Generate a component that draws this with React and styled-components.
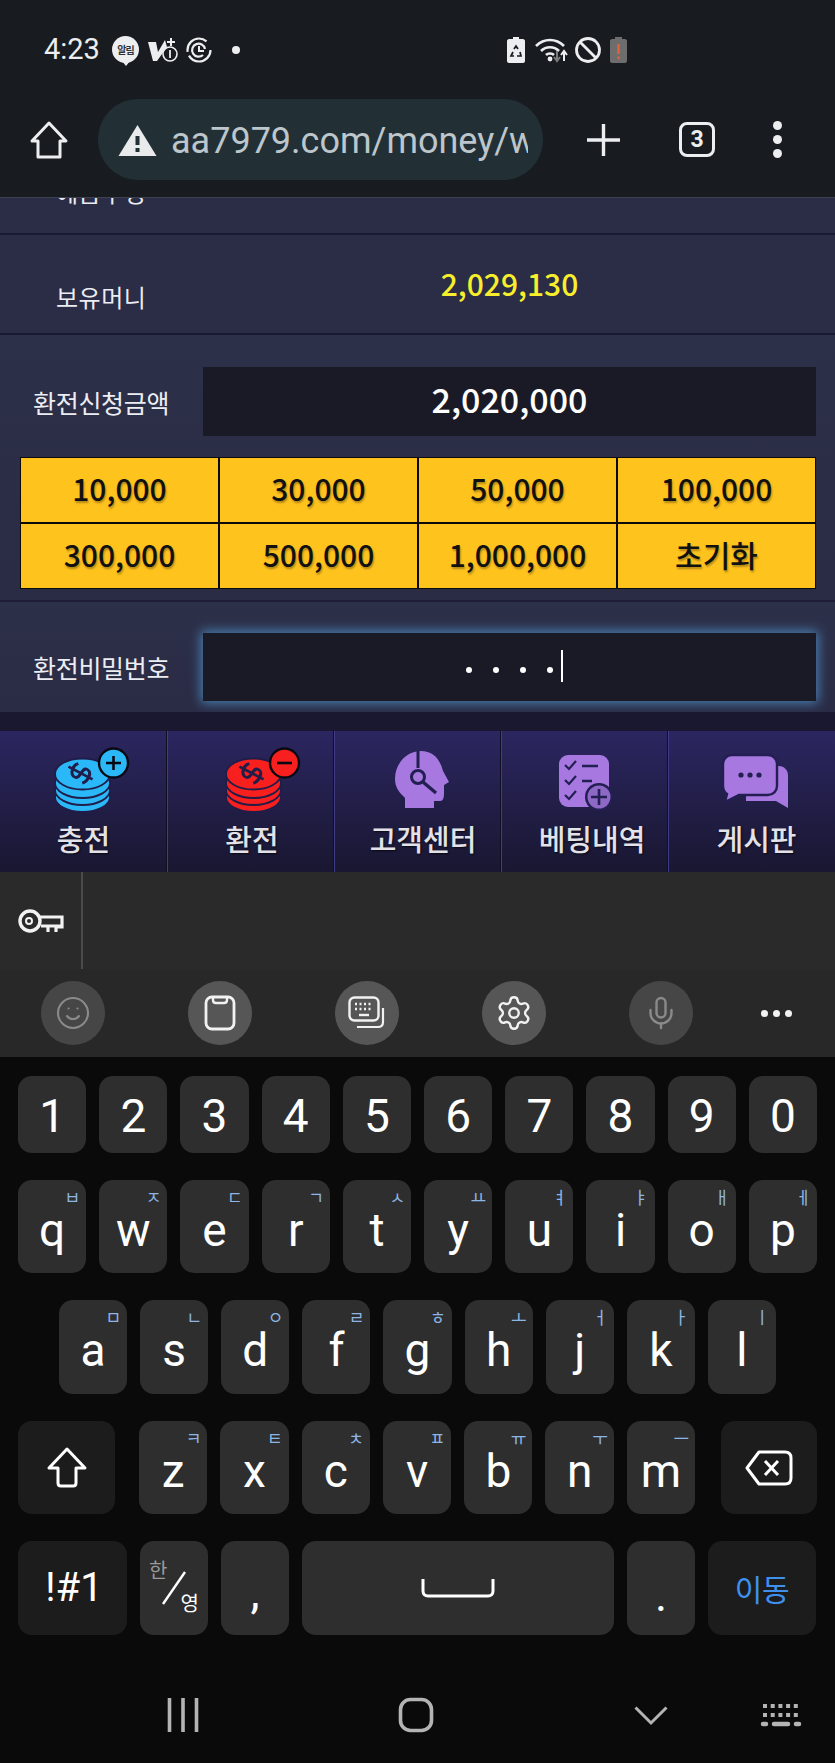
import React from "react";
import styled, { createGlobalStyle } from "styled-components";
import { Smile, Settings, Mic } from "lucide-react";

const Global = createGlobalStyle`
  html, body { margin: 0; padding: 0; background: #0a0a0a; }
  * { box-sizing: border-box; }
  #root { width: 835px; height: 1763px; overflow: hidden; }
`;

const KR = `"Noto Sans CJK KR", "Noto Sans", sans-serif`;

const Page = styled.div`
  width: 835px;
  height: 1763px;
  display: flex;
  flex-direction: column;
  font-family: ${KR};
  overflow: hidden;
`;

/* browser chrome */
const Chrome = styled.header`
  height: 198px;
  background: #181c20;
  border-bottom: 1px solid #3d424c;
`;
const StatusBar = styled.div`
  height: 99px;
  padding: 0 208px 0 44px;
  display: flex;
  align-items: center;
  justify-content: space-between;
  color: #eceef0;
`;
const StatusGroup = styled.div`
  display: flex;
  align-items: center;
  gap: ${(p) => p.$gap}px;
`;
const Clock = styled.span`
  font: 400 29px/1 Roboto, sans-serif;
  width: 68px;
`;
const Notice = styled.span`
  position: relative;
  width: 27px;
  height: 27px;
  border-radius: 50%;
  background: #eceef0;
  color: #30343a;
  font: 700 10px/27px ${KR};
  text-align: center;
  letter-spacing: -1px;
  margin-right: 9px;
  &::after {
    content: "";
    position: absolute;
    left: 10px;
    bottom: -3px;
    border-left: 4px solid transparent;
    border-right: 4px solid transparent;
    border-top: 5px solid #eceef0;
  }
`;
const UrlRow = styled.div`
  height: 81px;
  padding-left: 30px;
  display: flex;
  align-items: center;
`;
const UrlPill = styled.div`
  width: 445px;
  height: 81px;
  margin-left: 30px;
  margin-right: 44px;
  padding: 0 15px 0 20px;
  border-radius: 40px;
  background: #223036;
  display: flex;
  align-items: center;
  gap: 14px;
  overflow: hidden;
`;
const UrlText = styled.span`
  flex: 1;
  min-width: 0;
  padding-top: 3px;
  overflow: hidden;
  white-space: nowrap;
  color: #bcc6cb;
  font: 400 36px/44px Roboto, sans-serif;
`;
const TabCount = styled.span`
  width: 36px;
  height: 35px;
  margin-left: 59px;
  border: 3px solid #eceef0;
  border-radius: 8px;
  color: #eceef0;
  font: 700 23px/29px Roboto, sans-serif;
  text-align: center;
`;
const MenuDots = styled.span`
  width: 9px;
  margin-left: 58px;
  display: flex;
  flex-direction: column;
  gap: 5px;
  & > i {
    display: block;
    width: 9px;
    height: 9px;
    border-radius: 50%;
    background: #eceef0;
  }
`;

/* page form */
const Form = styled.section`
  height: 514px;
  background: #2b2c46;
  display: flex;
  flex-direction: column;
`;
const ClippedRow = styled.div`
  height: 37px;
  padding: 0 0 26px 56px;
  border-bottom: 2px solid #191932;
  display: flex;
  align-items: flex-end;
  overflow: hidden;
  color: #ecedf2;
  font-size: 24px;
  line-height: 30px;
  letter-spacing: 0.5px;
`;
const ClippedText = styled.span`
  flex: none;
  line-height: 30px;
`;
const MoneyRow = styled.div`
  height: 100px;
  border-bottom: 2px solid #191932;
  padding-right: 19px;
  display: grid;
  grid-template-columns: 203px 1fr;
  align-items: start;
`;
const MoneyLabel = styled.span`
  padding: 47px 0 0 56px;
  color: #ecedf2;
  font-size: 24px;
  line-height: 30px;
  letter-spacing: 0.5px;
`;
const MoneyValue = styled.span`
  padding-top: 30px;
  text-align: center;
  color: #f7ee2c;
  font-size: 30px;
  font-weight: 500;
  line-height: 36px;
`;
const Block = styled.div`
  height: ${(p) => p.$h}px;
  padding: ${(p) => p.$top}px 19px 0 20px;
  background: linear-gradient(#2d3049, #2a2b44);
  border-bottom: ${(p) => (p.$line ? "2px solid #1d1e36" : "none")};
`;
const Field = styled.div`
  display: grid;
  grid-template-columns: 170px 1fr;
  align-items: center;
  padding-left: 13px;
`;
const FieldLabel = styled.label`
  color: #ecedf2;
  font-size: 25px;
  line-height: 32px;
  letter-spacing: -0.3px;
  white-space: nowrap;
`;
const FieldBox = styled.div`
  height: ${(p) => p.$h}px;
  padding-bottom: ${(p) => p.$pb ?? 0}px;
  background: #1a1a27;
  display: flex;
  align-items: center;
  justify-content: center;
  color: #fff;
  font-size: 34px;
  font-weight: 500;
  box-shadow: ${(p) => (p.$focus ? "0 0 11px 2px #4a82b4" : "none")};
`;
const Amounts = styled.div`
  margin-top: 21px;
  display: grid;
  grid-template-columns: repeat(4, 1fr);
  grid-auto-rows: 64px;
  gap: 2px;
  padding: 1px;
  background: #0b0b0b;
`;
const Amount = styled.button`
  border: 0;
  padding: 0 0 4px;
  background: #ffc31e;
  color: #111;
  font: 500 30px/1 ${KR};
  text-shadow: 1px 2px 2px rgba(0, 0, 0, 0.3);
`;
const Dots = styled.div`
  position: relative;
  display: flex;
  gap: 21px;
  margin-top: 5px;
`;
const Dot = styled.i`
  width: 6px;
  height: 6px;
  border-radius: 50%;
  background: #fff;
`;
const Caret = styled.i`
  position: absolute;
  right: -10px;
  top: -17px;
  width: 2px;
  height: 32px;
  background: #fff;
`;
const Band = styled.div`
  height: 19px;
  background: #1a1830;
`;

/* site bottom nav */
const SiteNav = styled.nav`
  height: 141px;
  display: grid;
  grid-template-columns: repeat(5, 1fr);
`;
const NavCell = styled.a`
  padding-top: 17px;
  display: flex;
  flex-direction: column;
  align-items: center;
  background: linear-gradient(#2b2660, #191731);
  border-left: ${(p) => (p.$first ? "none" : "1px solid #413c86")};
  box-shadow: ${(p) => (p.$first ? "none" : "-1px 0 0 #0f0e22")};
`;
const NavLabel = styled.span`
  margin-top: 7px;
  margin-left: ${(p) => p.$ml}px;
  color: #e2e2e8;
  font-size: 29px;
  font-weight: 500;
  line-height: 38px;
  white-space: nowrap;
  text-shadow: 1px 1px 2px rgba(0, 0, 0, 0.7);
`;

/* keyboard */
const Suggest = styled.div`
  height: 97px;
  background: #2a2a2a;
  display: flex;
  align-items: center;
`;
const SuggestKey = styled.div`
  width: 83px;
  height: 97px;
  padding-left: 18px;
  display: flex;
  align-items: center;
  border-right: 2px solid #4b4b4b;
`;
const ToolBar = styled.div`
  height: 88px;
  background: #282828;
  padding: 0 27px 0 41px;
  display: flex;
  align-items: center;
  gap: 83px;
`;
const ToolButton = styled.div`
  width: 64px;
  height: 64px;
  border-radius: 50%;
  background: ${(p) => (p.$off ? "#464646" : "#565656")};
  color: ${(p) => (p.$off ? "#8a8a8a" : "#f2f2f2")};
  display: flex;
  align-items: center;
  justify-content: center;
`;
const More = styled.div`
  margin-left: -15px;
  display: flex;
  gap: 5px;
  & > i {
    width: 7px;
    height: 7px;
    border-radius: 50%;
    background: #f2f2f2;
  }
`;
const Board = styled.div`
  flex: 1;
  background: #0a0a0a;
  padding-top: 19px;
  display: flex;
  flex-direction: column;
  gap: 27px;
`;
const KeyRow = styled.div`
  height: ${(p) => p.$h}px;
  padding: 0 ${(p) => p.$pr ?? 18}px 0 ${(p) => p.$pl ?? 18}px;
  display: flex;
  gap: 13px;
`;
const Key = styled.div`
  position: relative;
  flex: ${(p) => (p.$w ? `0 0 ${p.$w}px` : "1 1 0")};
  margin-left: ${(p) => p.$ml ?? 0}px;
  border-radius: 14px;
  background: ${(p) => (p.$fn ? "#1c1c1c" : "#2e2e2e")};
  color: #fff;
  display: flex;
  align-items: center;
  justify-content: center;
  font: 400 ${(p) => p.$size ?? 46}px/1 Roboto, sans-serif;
  padding-top: ${(p) => p.$pt ?? 0}px;
  padding-left: ${(p) => p.$pl ?? 0}px;
`;
const Hint = styled.span`
  position: absolute;
  top: 6px;
  right: 6px;
  color: #8db6e4;
  font: 400 17px/22px ${KR};
`;
const LangTop = styled.span`
  position: absolute;
  left: 9px;
  top: 18px;
  color: #9a9a9a;
  font: 400 20px/22px ${KR};
`;
const LangBottom = styled.span`
  position: absolute;
  right: 9px;
  bottom: 21px;
  color: #fff;
  font: 400 20px/22px ${KR};
`;
const GoLabel = styled.span`
  color: #3f8fee;
  font: 400 30px/1 ${KR};
  letter-spacing: -0.3px;
`;
const SysNav = styled.div`
  height: 128px;
  margin-top: -27px;
  padding: 32px 35px 0 167px;
  display: flex;
  align-items: center;
  color: #b4b4b4;
`;

/* drawings */
const Ico = ({ w, h, children, style, vb }) => (
  <svg width={w} height={h} viewBox={vb || `0 0 ${w} ${h}`} fill="none" style={{ flex: "none", overflow: "visible", ...style }}>
    {children}
  </svg>
);

const Dollar = ({ x, y, c }) => (
  <g transform={`translate(${x} ${y}) rotate(-62) scale(0.9 1.05)`} stroke={c} strokeWidth="3" fill="none">
    <path d="M8 -6 C4 -10 -7 -9 -7 -3 C-7 3 7 -2 7 4 C7 10 -5 10 -9 6" />
    <path d="M0 -13 V13" />
  </g>
);

const CoinIcon = ({ color, minus, dx = 0 }) => {
  const dark = "#211d49";
  const cx = 38.5 + dx;
  return (
    <Ico w={80} h={64}>
      {[49, 42, 35].map((cy) => (
        <ellipse key={cy} cx={cx} cy={cy} rx="27.5" ry="15" fill={color} stroke={dark} strokeWidth="1.8" />
      ))}
      <ellipse cx={cx} cy={26} rx="27.5" ry="15.5" fill={color} stroke={dark} strokeWidth="1.8" />
      <Dollar x={cx - 2} y={25} c={dark} />
      <circle cx={69.5 + dx} cy="15" r="14.5" fill={color} stroke="#090914" strokeWidth="2.4" />
      <path d={minus ? `M${62 + dx} 15H${77 + dx}` : `M${62 + dx} 15H${77 + dx}M${69.5 + dx} 8V22`} stroke="#090914" strokeWidth="2.6" />
    </Ico>
  );
};

const HeadIcon = () => (
  <Ico w={80} h={64}>
    <path d="M43 3C29 3 17 15 17 31C17 40 22 45 27 50V60H56V53H62C66 53 66 48 66 44V37L71 34L65 23C62 11 55 3 43 3Z" fill="#a678e0" />
    <path d="M40 3V20" stroke="#231f52" strokeWidth="3" />
    <circle cx="40" cy="29" r="6.5" stroke="#231f52" strokeWidth="3" />
    <path d="M45 34L58 45" stroke="#231f52" strokeWidth="3.4" />
  </Ico>
);

const ListIcon = () => (
  <Ico w={80} h={64}>
    <rect x="14" y="7" width="50" height="52" rx="9" fill="#a678e0" />
    <path d="M20 17L24 21L31 13M20 32L24 36L31 28M20 47L24 51L31 43" stroke="#231f52" strokeWidth="2.2" />
    <path d="M37 18H53M37 33H47" stroke="#231f52" strokeWidth="2.6" />
    <circle cx="54" cy="49" r="14" fill="#231f52" />
    <circle cx="54" cy="49" r="11.5" fill="#8d68c4" />
    <path d="M46 49H62M54 41V57" stroke="#231f52" strokeWidth="2.6" />
  </Ico>
);

const ChatIcon = () => (
  <Ico w={80} h={64}>
    <path d="M34 18H67C72 18 76 22 76 27V60L64 53H34Z" fill="#a678e0" />
    <path d="M20 7H56C61 7 65 11 65 16V38C65 43 61 47 56 47H27L13 54L15 46C12 44 11 41 11 38V16C11 11 15 7 20 7Z" fill="#a678e0" stroke="#231f52" strokeWidth="2.4" />
    <circle cx="29" cy="27" r="2.6" fill="#231f52" />
    <circle cx="38" cy="27" r="2.6" fill="#231f52" />
    <circle cx="47" cy="27" r="2.6" fill="#231f52" />
  </Ico>
);

const navItems = [
  { label: "충전", ml: 0, icon: <CoinIcon color="#2bb8f8" /> },
  { label: "환전", ml: 2, icon: <CoinIcon color="#f8201f" minus dx={4} /> },
  { label: "고객센터", ml: 10, icon: <HeadIcon /> },
  { label: "베팅내역", ml: 14, icon: <ListIcon /> },
  { label: "게시판", ml: 9, icon: <ChatIcon /> },
];

const amounts = ["10,000", "30,000", "50,000", "100,000", "300,000", "500,000", "1,000,000", "초기화"];
const digits = "1234567890".split("");
const row2 = [["q", "ㅂ"], ["w", "ㅈ"], ["e", "ㄷ"], ["r", "ㄱ"], ["t", "ㅅ"], ["y", "ㅛ"], ["u", "ㅕ"], ["i", "ㅑ"], ["o", "ㅐ"], ["p", "ㅔ"]];
const row3 = [["a", "ㅁ"], ["s", "ㄴ"], ["d", "ㅇ"], ["f", "ㄹ"], ["g", "ㅎ"], ["h", "ㅗ"], ["j", "ㅓ"], ["k", "ㅏ"], ["l", "ㅣ"]];
const row4 = [["z", "ㅋ"], ["x", "ㅌ"], ["c", "ㅊ"], ["v", "ㅍ"], ["b", "ㅠ"], ["n", "ㅜ"], ["m", "ㅡ"]];

export default function App() {
  return (
    <Page>
      <Global />
      <Chrome>
        <StatusBar>
          <StatusGroup $gap={0}>
            <Clock>4:23</Clock>
            <Notice>알림</Notice>
            <Ico w={30} h={24} style={{ marginRight: 8 }}>
              <path d="M0 4H8L10 14L17 2L19 9L9 23H5Z" fill="#eceef0" />
              <path d="M19 4H27M23 0V8" stroke="#eceef0" strokeWidth="2" />
              <circle cx="22" cy="16" r="7" fill="#181c20" stroke="#eceef0" strokeWidth="1.6" />
              <path d="M22 12V20" stroke="#eceef0" strokeWidth="1.8" />
            </Ico>
            <Ico w={26} h={26} style={{ marginRight: 20 }}>
              <circle cx="13" cy="13" r="11.5" stroke="#eceef0" strokeWidth="2.2" strokeDasharray="30 4 28 10" />
              <path d="M19 12A6.5 6.5 0 1 0 17 18" stroke="#eceef0" strokeWidth="2.2" />
              <path d="M13 9V14H18" stroke="#eceef0" strokeWidth="2" />
            </Ico>
            <Ico w={8} h={8}>
              <circle cx="4" cy="4" r="4" fill="#eceef0" />
            </Ico>
          </StatusGroup>
          <StatusGroup $gap={7}>
            <Ico w={18} h={26} style={{ marginRight: 3 }}>
              <path d="M6 0H12V2H16C17 2 18 3 18 4V24C18 25 17 26 16 26H2C1 26 0 25 0 24V4C0 3 1 2 2 2H6Z" fill="#eceef0" />
              <path d="M7 12L9 9L11 12M13 15L14 19H10M7 19H4L6 15" stroke="#181c20" strokeWidth="1.7" />
            </Ico>
            <Ico w={33} h={25}>
              <path d="M1 9C9 1 21 1 29 9M6 14C11 9 19 9 24 14M11 18C13 16 17 16 19 18" stroke="#eceef0" strokeWidth="2.6" />
              <circle cx="15" cy="22" r="2.4" fill="#eceef0" />
              <path d="M22 14V24M19 20L22 24L25 20" stroke="#7a7a7a" strokeWidth="2" />
              <path d="M29 24V15M26 18L29 14L32 18" stroke="#eceef0" strokeWidth="2" />
            </Ico>
            <Ico w={26} h={26}>
              <circle cx="13" cy="13" r="11.5" stroke="#eceef0" strokeWidth="2.8" />
              <path d="M5 5L21 21" stroke="#eceef0" strokeWidth="2.8" />
            </Ico>
            <Ico w={17} h={26} style={{ marginLeft: 2 }}>
              <path d="M5 0H12V2H15C16 2 17 3 17 4V24C17 25 16 26 15 26H2C1 26 0 25 0 24V4C0 3 1 2 2 2H5Z" fill="#6d6d6d" />
              <path d="M8.5 7V17M8.5 19.5V22" stroke="#e2603a" strokeWidth="2.6" />
            </Ico>
          </StatusGroup>
        </StatusBar>
        <UrlRow>
          <Ico w={38} h={38}>
            <path d="M19 2L36 20H30V36H8V20H2Z" stroke="#eceef0" strokeWidth="3" strokeLinejoin="round" />
          </Ico>
          <UrlPill>
            <Ico w={39} h={32}>
              <path d="M19.5 1L38.5 32H0.5Z" fill="#e8eaec" />
              <path d="M19.5 12V21M19.5 24V28" stroke="#223036" strokeWidth="4" />
            </Ico>
            <UrlText>aa7979.com/money/w</UrlText>
          </UrlPill>
          <Ico w={33} h={32}>
            <path d="M0 16H33M16.5 0V32" stroke="#eceef0" strokeWidth="3.4" />
          </Ico>
          <TabCount>3</TabCount>
          <MenuDots>
            <i />
            <i />
            <i />
          </MenuDots>
        </UrlRow>
      </Chrome>

      <Form>
        <ClippedRow>
          <ClippedText>예금주명</ClippedText>
        </ClippedRow>
        <MoneyRow>
          <MoneyLabel>보유머니</MoneyLabel>
          <MoneyValue>2,029,130</MoneyValue>
        </MoneyRow>
        <Block $h={267} $top={32} $line>
          <Field>
            <FieldLabel>환전신청금액</FieldLabel>
            <FieldBox $h={69} $pb={6}>2,020,000</FieldBox>
          </Field>
          <Amounts>
            {amounts.map((a) => (
              <Amount key={a}>{a}</Amount>
            ))}
          </Amounts>
        </Block>
        <Block $h={110} $top={31}>
          <Field>
            <FieldLabel>환전비밀번호</FieldLabel>
            <FieldBox $h={68} $focus>
              <Dots>
                <Dot />
                <Dot />
                <Dot />
                <Dot />
                <Caret />
              </Dots>
            </FieldBox>
          </Field>
        </Block>
      </Form>
      <Band />

      <SiteNav>
        {navItems.map((n, i) => (
          <NavCell key={n.label} $first={i === 0}>
            {n.icon}
            <NavLabel $ml={n.ml}>{n.label}</NavLabel>
          </NavCell>
        ))}
      </SiteNav>

      <Suggest>
        <SuggestKey>
          <Ico w={45} h={26}>
            <circle cx="12" cy="13" r="10" stroke="#f2f2f2" strokeWidth="3.4" />
            <circle cx="11" cy="13" r="3" stroke="#f2f2f2" strokeWidth="2" />
            <path d="M22 9H44V19H38V24M30 19V24M23 18H44" stroke="#f2f2f2" strokeWidth="3.2" />
          </Ico>
        </SuggestKey>
      </Suggest>
      <ToolBar>
        <ToolButton $off>
          <Smile size={36} strokeWidth={1.4} />
        </ToolButton>
        <ToolButton>
          <Ico w={32} h={36}>
            <rect x="2" y="2" width="28" height="32" rx="6" stroke="currentColor" strokeWidth="2.8" />
            <path d="M9 2V5C9 7 10 8 12 8H20C22 8 23 7 23 5V2" stroke="currentColor" strokeWidth="2.4" />
          </Ico>
        </ToolButton>
        <ToolButton>
          <Ico w={38} h={34}>
            <rect x="1.5" y="1.5" width="29" height="23" rx="5" stroke="currentColor" strokeWidth="2.4" />
            <path d="M7 8H25M7 13H25" stroke="currentColor" strokeWidth="2.4" strokeDasharray="2 2.5" />
            <path d="M11 19H21" stroke="currentColor" strokeWidth="2.4" />
            <path d="M35 12V26C35 29 33 31 30 31H9" stroke="currentColor" strokeWidth="2.2" />
          </Ico>
        </ToolButton>
        <ToolButton>
          <Settings size={38} strokeWidth={1.5} />
        </ToolButton>
        <ToolButton $off>
          <Mic size={36} strokeWidth={1.6} />
        </ToolButton>
        <More>
          <i />
          <i />
          <i />
        </More>
      </ToolBar>

      <Board>
        <KeyRow $h={77}>
          {digits.map((d) => (
            <Key key={d} $size={46} $pt={3}>{d}</Key>
          ))}
        </KeyRow>
        <KeyRow $h={93}>
          {row2.map(([l, h]) => (
            <Key key={l} $pt={6}>
              {l}
              <Hint>{h}</Hint>
            </Key>
          ))}
        </KeyRow>
        <KeyRow $h={94} $pl={59} $pr={59}>
          {row3.map(([l, h]) => (
            <Key key={l} $pt={6}>
              {l}
              <Hint>{h}</Hint>
            </Key>
          ))}
        </KeyRow>
        <KeyRow $h={93}>
          <Key $fn $w={97}>
            <Ico w={40} h={41}>
              <path d="M20 2L38 21H29V36C29 38 28 39 26 39H14C12 39 11 38 11 36V21H2Z" stroke="#fff" strokeWidth="3" strokeLinejoin="round" />
            </Ico>
          </Key>
          {row4.map(([l, h], i) => (
            <Key key={l} $w={68.3} $ml={i === 0 ? 11 : 0} $pt={6}>
              {l}
              <Hint>{h}</Hint>
            </Key>
          ))}
          <Key $fn $w={96} $ml={13}>
            <Ico w={48} h={36}>
              <path d="M14 2H40C44 2 46 4 46 8V28C46 32 44 34 40 34H14L2 18Z" stroke="#fff" strokeWidth="3" strokeLinejoin="round" />
              <path d="M20 11L33 25M33 11L20 25" stroke="#fff" strokeWidth="3" />
            </Ico>
          </Key>
        </KeyRow>
        <KeyRow $h={94}>
          <Key $fn $w={109} $size={40} $pl={3}>!#1</Key>
          <Key $w={68}>
            <LangTop>한</LangTop>
            <Ico w={30} h={36}>
              <path d="M26 2L4 34" stroke="#fff" strokeWidth="2.4" />
            </Ico>
            <LangBottom>영</LangBottom>
          </Key>
          <Key $w={68} $pt={8}>,</Key>
          <Key $w={312}>
            <Ico w={74} h={20}>
              <path d="M2 1V13C2 16 4 18 7 18H67C70 18 72 16 72 13V1" stroke="#fff" strokeWidth="3" />
            </Ico>
          </Key>
          <Key $w={68} $pt={14}>.</Key>
          <Key $fn $w={108}>
            <GoLabel>이동</GoLabel>
          </Key>
        </KeyRow>
        <SysNav>
          <Ico w={32} h={34}>
            <path d="M2.5 0V34M16 0V34M29.5 0V34" stroke="currentColor" strokeWidth="3.6" />
          </Ico>
          <Ico w={36} h={36} style={{ marginLeft: 199 }}>
            <rect x="2.5" y="2.5" width="31" height="31" rx="10" stroke="currentColor" strokeWidth="3.6" />
          </Ico>
          <Ico w={34} h={19} style={{ marginLeft: 200 }}>
            <path d="M1.5 1.5L17 17L32.5 1.5" stroke="currentColor" strokeWidth="3" />
          </Ico>
          <Ico w={40} h={24} style={{ marginLeft: 93 }}>
            <path d="M2 3H38M2 12H38" stroke="currentColor" strokeWidth="4" strokeDasharray="4 3.7" />
            <path d="M2 21H5M35 21H38M13 21H27" stroke="currentColor" strokeWidth="4.5" strokeLinecap="round" />
          </Ico>
        </SysNav>
      </Board>
    </Page>
  );
}
